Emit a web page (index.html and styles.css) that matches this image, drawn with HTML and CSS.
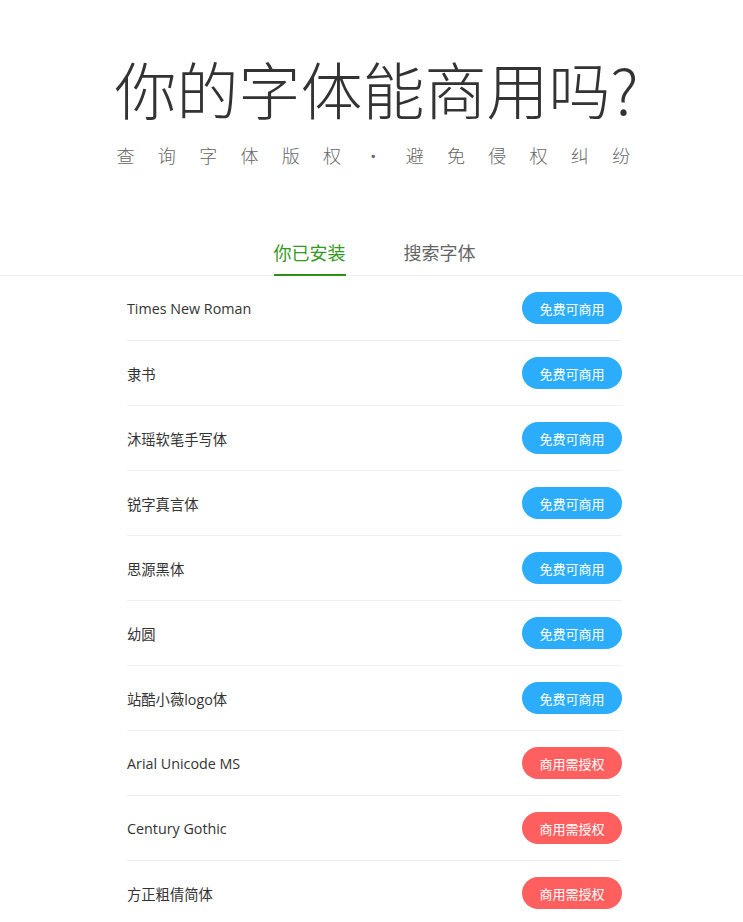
FILE: index.html
```html
<!DOCTYPE html>
<html lang="zh-CN">
<head>
<meta charset="utf-8">
<title>你的字体能商用吗？</title>
<link rel="stylesheet" href="styles.css">
</head>
<body>
<header class="hero">
  <h1 class="title">你的字体能商用吗?</h1>
  <p class="subtitle">查询字体版权·避免侵权纠纷</p>
</header>
<nav class="tabs">
  <a class="tab active">你已安装</a>
  <a class="tab">搜索字体</a>
</nav>
<ul class="list">
  <li class="row"><span class="name">Times New Roman</span><span class="badge free">免费可商用</span></li>
  <li class="row"><span class="name">隶书</span><span class="badge free">免费可商用</span></li>
  <li class="row"><span class="name">沐瑶软笔手写体</span><span class="badge free">免费可商用</span></li>
  <li class="row"><span class="name">锐字真言体</span><span class="badge free">免费可商用</span></li>
  <li class="row"><span class="name">思源黑体</span><span class="badge free">免费可商用</span></li>
  <li class="row"><span class="name">幼圆</span><span class="badge free">免费可商用</span></li>
  <li class="row"><span class="name">站酷小薇logo体</span><span class="badge free">免费可商用</span></li>
  <li class="row"><span class="name">Arial Unicode MS</span><span class="badge paid">商用需授权</span></li>
  <li class="row"><span class="name">Century Gothic</span><span class="badge paid">商用需授权</span></li>
  <li class="row"><span class="name">方正粗倩简体</span><span class="badge paid">商用需授权</span></li>
</ul>
</body>
</html>
```
FILE: styles.css
```css
* { box-sizing: border-box; }
html, body { margin: 0; padding: 0; background: #fff; }
body {
  font-family: "Open Sans", "Noto Sans CJK SC", sans-serif;
  color: #333;
}
.hero {
  padding-top: 48px;
  text-align: center;
}
.title {
  margin: 0 0 0 10px;
  font-family: "Noto Sans CJK SC", sans-serif;
  font-weight: 200;
  font-size: 62px;
  line-height: 80px;
  color: #333;
  letter-spacing: 0;
}
.subtitle {
  margin: 12px 0 0 27px;
  font-family: "Noto Sans CJK SC", sans-serif;
  font-weight: 300;
  font-size: 18px;
  line-height: 30px;
  letter-spacing: 23.3px;
  color: #666;
}
.tabs {
  margin-top: 66px;
  display: flex;
  justify-content: center;
  gap: 58px;
  padding-left: 6px;
  border-bottom: 1px solid #eeeeee;
}
.tab {
  font-family: "Noto Sans CJK SC", sans-serif;
  font-size: 18px;
  line-height: 24px;
  padding: 4px 0 10px;
  color: #666;
  border-bottom: 2px solid transparent;
  margin-bottom: -1px;
}
.tab.active {
  color: #359a1e;
  border-bottom-color: #2f9018;
}
.list {
  list-style: none;
  margin: 0 auto;
  padding: 0;
  width: 495px;
  position: relative;
  left: 3px;
}
.row {
  display: flex;
  align-items: center;
  justify-content: space-between;
  height: 65px;
  border-bottom: 1px solid #f0f0f0;
}
.name {
  font-size: 14.3px;
  color: #333;
  font-family: "Open Sans", "Noto Sans CJK SC", sans-serif;
}
.badge {
  width: 100px;
  height: 32px;
  border-radius: 16px;
  display: flex;
  align-items: center;
  justify-content: center;
  color: #fff;
  font-size: 13px;
  font-family: "Noto Sans CJK SC", sans-serif;
}
.badge.free { background: #2badfc; }
.badge.paid { background: #ff5f5f; }
```
